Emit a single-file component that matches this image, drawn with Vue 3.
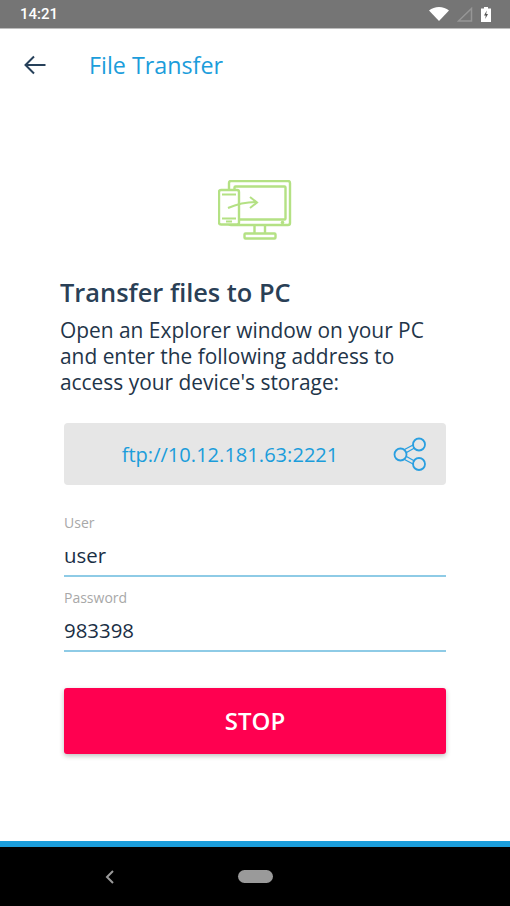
<template>
  <div class="screen">
    <div class="status-bar">
      <span class="time">14:21</span>
      <div class="status-icons">
        <svg width="20" height="14" viewBox="0 0 20 14"><path d="M0 3.5C2.8 1.2 6.2 0 10 0s7.200 1.200 10 3.500L10 14z" fill="#fff"/></svg>
        <svg width="16" height="15" viewBox="0 0 16 15"><path d="M1.500 14L14.500 1.500V14z" fill="none" stroke="#969696" stroke-width="1.500"/></svg>
        <svg width="10" height="15" viewBox="0 0 10 15"><path d="M3 0h4v1.500h3V15H0V1.500h3z" fill="#fff"/><path d="M5.800 3.500L3 8.500h1.800L4.200 12 7 7H5.200z" fill="#555"/></svg>
      </div>
    </div>

    <header class="toolbar">
      <button class="back">
        <svg width="24" height="24" viewBox="0 0 24 24"><path d="M22.500 12H2.500M11 3.500L2.500 12l8.500 8.500" fill="none" stroke="#26405a" stroke-width="2"/></svg>
      </button>
      <h1>File Transfer</h1>
    </header>

    <main class="content">
      <svg class="hero" width="74" height="60" viewBox="218 180 74 60" fill="none" stroke="#b4e184" stroke-width="2.400">
        <rect x="229" y="181" width="61" height="44" rx="2"/>
        <rect x="234.500" y="186.500" width="51" height="33" rx="1"/>
        <circle cx="282.500" cy="222.500" r="1.800" fill="#b4e184" stroke="none"/>
        <path d="M254.500 225v8M265 225v8"/>
        <rect x="244.500" y="233.500" width="31" height="5" rx="1"/>
        <rect x="219" y="190" width="20" height="34.500" rx="2" fill="#fff"/>
        <path d="M222 194.500h14M222 218.500h14M226 221.500h6" stroke-width="1.800"/>
        <path d="M228 208c8-3.500 18-6 29-6M250 197l7 5.500-7 5.500" stroke-width="2"/>
      </svg>

      <h2>Transfer files to PC</h2>
      <p>Open an Explorer window on your PC<br>and enter the following address to<br>access your device's storage:</p>

      <div class="form">
        <div class="address">
          <span>{{ address }}</span>
          <svg width="40" height="38" viewBox="390 435 40 38" fill="none" stroke="#2a9fe0" stroke-width="1.800">
            <circle cx="400.500" cy="454.500" r="6"/>
            <circle cx="419" cy="444.500" r="6"/>
            <circle cx="419" cy="464" r="6"/>
            <path d="M404.500 449.500l9.500-5M406.500 452.500l8-4.500M406.500 456.500l8 4.500M404.500 459.500l9.500 5" stroke-width="1.400"/>
          </svg>
        </div>

        <div v-for="field in fields" :key="field.label" class="field">
          <label>{{ field.label }}</label>
          <div class="value">{{ field.value }}</div>
        </div>

        <button class="stop">STOP</button>
      </div>
    </main>

    <div class="accent"></div>
    <nav class="nav-bar">
      <svg width="12" height="16" viewBox="0 0 12 16"><path d="M9 2L3 8l6 6" fill="none" stroke="#9a9a9a" stroke-width="2"/></svg>
      <span class="home"></span>
    </nav>
  </div>
</template>

<script setup>
const address = 'ftp://10.12.181.63:2221'

const fields = [
  { label: 'User', value: 'user' },
  { label: 'Password', value: '983398' }
]
</script>

<style>
html, body {
  margin: 0;
  background: #fff;
}
</style>

<style scoped>
.screen {
  width: 510px;
  height: 906px;
  display: flex;
  flex-direction: column;
  overflow: hidden;
  background: #fff;
  font-family: "Open Sans", "Noto Sans", sans-serif;
  color: #1f3549;
}

.status-bar {
  height: 28px;
  flex: none;
  display: flex;
  align-items: center;
  justify-content: space-between;
  padding: 0 19px 0 20px;
  background: #757575;
  border-bottom: 1px solid #bdbdbd;
  color: #fff;
}

.time {
  font-family: Roboto, sans-serif;
  font-size: 15px;
  font-weight: 500;
}

.status-icons {
  display: flex;
  align-items: center;
  gap: 8px;
}

.toolbar {
  height: 72px;
  flex: none;
  display: flex;
  align-items: center;
  padding-left: 23px;
}

.back {
  width: 24px;
  height: 24px;
  padding: 0;
  border: 0;
  background: none;
}

.toolbar h1 {
  margin: 0 0 0 42px;
  font-size: 23.300px;
  font-weight: 400;
  color: #1b9ddb;
}

.content {
  flex: 1;
  display: flex;
  flex-direction: column;
  padding: 0 64px 0 60px;
}

.hero {
  align-self: center;
  margin: 79px 0 0 4px;
}

.content h2 {
  margin: 35px 0 0;
  font-size: 25.400px;
  line-height: 34px;
  font-weight: 600;
  color: #2a4056;
}

.content p {
  margin: 8px 0 0;
  font-size: 20.900px;
  line-height: 26px;
  white-space: nowrap;
}

.form {
  margin: 28px 0 0 4px;
}

.address {
  height: 62px;
  display: flex;
  align-items: center;
  padding: 0 16px 0 6px;
  box-sizing: border-box;
  border-radius: 4px;
  background: #e6e6e6;
  color: #1b9ddb;
  font-size: 20.100px;
}

.address span {
  flex: 1;
  text-align: center;
}

.field {
  height: 75px;
  box-sizing: border-box;
  border-bottom: 2px solid #8ecbe6;
}

.address + .field {
  margin-top: 17px;
}

.field label {
  display: block;
  padding-top: 12px;
  font-size: 14px;
  line-height: 18px;
  color: #a8a8a8;
}

.value {
  margin-top: 9px;
  font-size: 20.400px;
  line-height: 28px;
  color: #1a2f45;
}

.stop {
  display: block;
  width: 100%;
  height: 66px;
  margin-top: 36px;
  border: 0;
  border-radius: 3px;
  background: #ff0050;
  box-shadow: 0 2px 5px rgba(0, 0, 0, 0.25);
  color: #fff;
  font-family: inherit;
  font-size: 24px;
  font-weight: 600;
  padding-bottom: 2px;
}

.accent {
  height: 6px;
  flex: none;
  background: #1b9ddb;
}

.nav-bar {
  height: 59px;
  flex: none;
  display: flex;
  align-items: center;
  padding-left: 104px;
  background: #000;
}

.home {
  width: 35px;
  height: 13px;
  margin-left: 122px;
  border-radius: 7px;
  background: #9a9a9a;
}
</style>
